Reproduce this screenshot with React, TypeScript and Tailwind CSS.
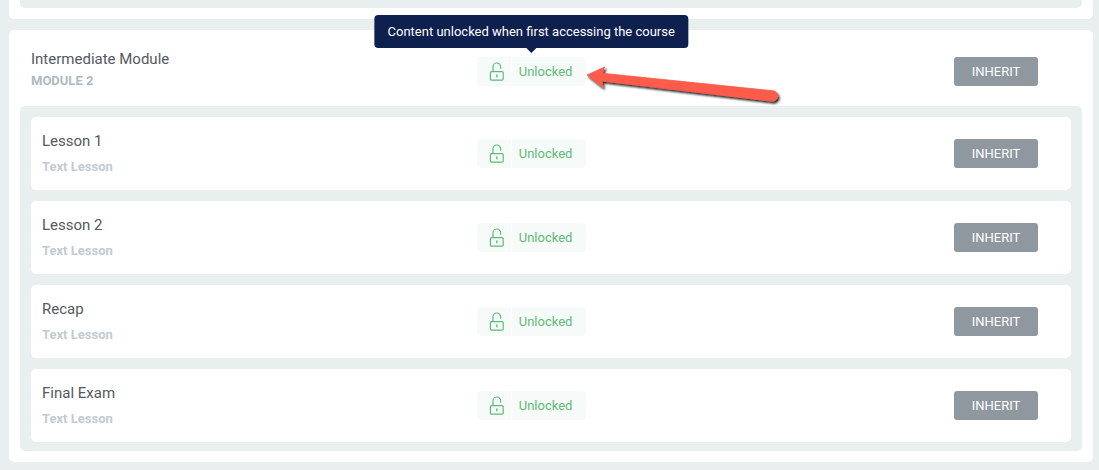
import type { ReactNode } from 'react';

type Lesson = {
  title: string;
  type: string;
};

const lessons: Lesson[] = [
  { title: 'Lesson 1', type: 'Text Lesson' },
  { title: 'Lesson 2', type: 'Text Lesson' },
  { title: 'Recap', type: 'Text Lesson' },
  { title: 'Final Exam', type: 'Text Lesson' },
];

function UnlockIcon() {
  return (
    <svg className="w-4 h-5" viewBox="0 0 16 20" fill="none" stroke="currentColor" strokeWidth={1.2} aria-hidden="true">
      <rect x="1.4" y="9.6" width="12.8" height="8.6" rx="1.2" />
      <path d="M4 9.6V4.8a3.8 3.8 0 0 1 7.6 0v1.4" strokeLinecap="round" />
      <path d="M7.8 12.4v2.8" strokeWidth={1.4} />
    </svg>
  );
}

function StatusBadge() {
  return (
    <button type="button" className="flex h-[29px] gap-px rounded overflow-hidden text-[#5fbb77] text-[13px] leading-5">
      <span className="flex w-[34px] h-full items-center justify-center pl-1.5 bg-[#f6faf8]">
        <UnlockIcon />
      </span>
      <span className="flex w-[74px] h-full items-center pl-[7px] bg-[#f6faf8]">Unlocked</span>
    </button>
  );
}

function Tooltip({ text }: { text: string }) {
  return (
    <div
      role="tooltip"
      className="absolute bottom-full left-1/2 z-10 mb-[9px] -translate-x-1/2 whitespace-nowrap rounded bg-[#0e204d] px-[13px] py-[7px] text-[13px] leading-[19px] text-white"
    >
      {text}
      <span className="absolute top-full left-1/2 -translate-x-1/2 border-x-[5px] border-t-[5px] border-x-transparent border-t-[#0e204d]" />
    </div>
  );
}

function PointerArrow() {
  return (
    <svg
      className="absolute top-0 left-full z-10 w-[200px] h-[50px] overflow-visible pointer-events-none"
      viewBox="0 0 200 50"
      aria-hidden="true"
    >
      <defs>
        <filter id="arrow-shadow" x="-10%" y="-30%" width="120%" height="170%">
          <feDropShadow dx="1.5" dy="2" stdDeviation="1.1" floodColor="#000000" floodOpacity="0.85" />
        </filter>
      </defs>
      <path
        d="M1 18 L18.5 10 L16.5 16.3 L187 33.8 A5.2 5.2 0 0 1 186 44.2 L16 24 L17 30.5 Z"
        fill="#fd5b4c"
        stroke="#fd5b4c"
        strokeWidth="0.8"
        strokeLinejoin="round"
        filter="url(#arrow-shadow)"
      />
    </svg>
  );
}

function Row({ label, status, className }: { label: ReactNode; status: ReactNode; className: string }) {
  return (
    <div className={`grid grid-cols-[3fr_4fr] items-center ${className}`}>
      <div>{label}</div>
      <div className="flex items-center justify-between pr-[33px]">
        {status}
        <button type="button" className="h-[29px] w-[84px] rounded-[3px] bg-[#8f989f] text-[13px] leading-5 text-white">
          INHERIT
        </button>
      </div>
    </div>
  );
}

export default function App() {
  return (
    <main className="min-h-screen bg-[#e9efee] pr-1.5 pb-2 pl-[9px] font-['Roboto',sans-serif] text-[#54595f]">
      {/* Tail of the previous module */}
      <section className="rounded-b-[5px] bg-white px-[11px] pb-[11px]">
        <div className="h-2 rounded-b-[5px] bg-[#e9efee]" />
      </section>

      <section className="mt-[11px] rounded-[5px] bg-white px-[11px] pb-[11px]">
        <Row
          className="mx-[11px] h-[76px] pt-[7px]"
          label={
            <div className="pb-1">
              <h2 className="text-[15px] leading-[22px]">Intermediate Module</h2>
              <p className="text-[13px] leading-[22px] font-bold text-[#b0b9c0]">MODULE 2</p>
            </div>
          }
          status={
            <div className="relative">
              <StatusBadge />
              <Tooltip text="Content unlocked when first accessing the course" />
              <PointerArrow />
            </div>
          }
        />

        <ul className="flex flex-col gap-[11px] rounded-[5px] bg-[#e9efee] px-[11px] pt-[11px] pb-[9px]">
          {lessons.map((lesson) => (
            <li key={lesson.title}>
              <Row
                className="h-[73px] rounded-[5px] bg-white"
                label={
                  <div className="pl-[11px]">
                    <h3 className="text-[15px] leading-[26px]">{lesson.title}</h3>
                    <p className="text-[13px] leading-[25px] font-bold text-[#c2cbd1]">{lesson.type}</p>
                  </div>
                }
                status={<StatusBadge />}
              />
            </li>
          ))}
        </ul>
      </section>
    </main>
  );
}
